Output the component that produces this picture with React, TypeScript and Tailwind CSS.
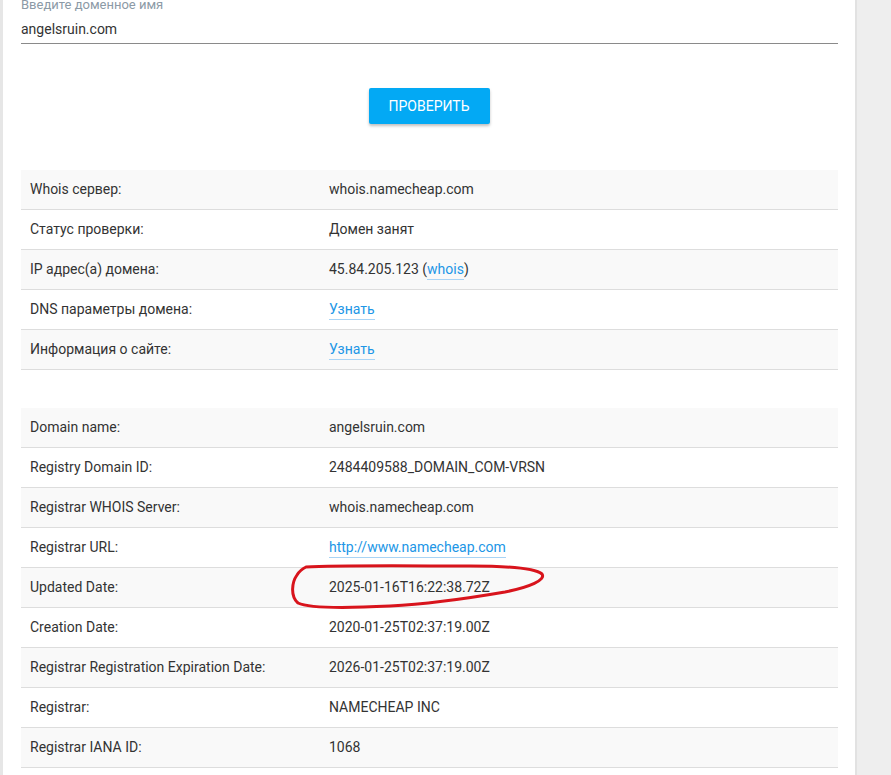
import React from "react";

type Row = { label: string; value: React.ReactNode };

const Link = ({ children }: { children: React.ReactNode }) => (
  <span className="text-[#2196e6] border-b border-[#a9d4f5] pb-[2px]">{children}</span>
);

const rows1: Row[] = [
  { label: "Whois сервер:", value: "whois.namecheap.com" },
  { label: "Статус проверки:", value: "Домен занят" },
  {
    label: "IP адрес(а) домена:",
    value: (
      <>
        45.84.205.123 (<Link>whois</Link>)
      </>
    ),
  },
  { label: "DNS параметры домена:", value: <Link>Узнать</Link> },
  { label: "Информация о сайте:", value: <Link>Узнать</Link> },
];

const rows2: Row[] = [
  { label: "Domain name:", value: "angelsruin.com" },
  { label: "Registry Domain ID:", value: "2484409588_DOMAIN_COM-VRSN" },
  { label: "Registrar WHOIS Server:", value: "whois.namecheap.com" },
  { label: "Registrar URL:", value: <Link>http://www.namecheap.com</Link> },
  { label: "Updated Date:", value: "2025-01-16T16:22:38.72Z" },
  { label: "Creation Date:", value: "2020-01-25T02:37:19.00Z" },
  { label: "Registrar Registration Expiration Date:", value: "2026-01-25T02:37:19.00Z" },
  { label: "Registrar:", value: "NAMECHEAP INC" },
  { label: "Registrar IANA ID:", value: "1068" },
];

const Table = ({ rows }: { rows: Row[] }) => (
  <div className="flex flex-col">
    {rows.map((r, i) => (
      <div
        key={i}
        className={`flex h-[40px] items-center border-b border-[#dddddd] ${i % 2 === 0 ? "bg-[#f9f9f9]" : "bg-white"}`}
      >
        <div className="w-[308px] pl-[9px] shrink-0">{r.label}</div>
        <div>{r.value}</div>
      </div>
    ))}
  </div>
);

export default function App() {
  return (
    <div
      className="relative flex h-[775px] overflow-hidden bg-[#eeeeee] text-[14px] text-[#333333]"
      style={{ fontFamily: "Roboto, 'Noto Sans', sans-serif" }}
    >
      <div className="w-[3px] shrink-0 bg-[#e6e6e6]" />
      <div className="w-[854px] shrink-0 bg-white border-r-2 border-[#e2e2e2] pl-[18px] pr-[17px]">
        <div className="-mt-[3px]">
          <div className="text-[13px] leading-[16px] text-[#8c9aa6]">Введите доменное имя</div>
          <div className="mt-[4px] h-[27px] leading-[24px] border-b border-[#8a8a8a] text-[#333]">angelsruin.com</div>
        </div>
        <div className="flex justify-center mt-[44px] pr-[1px]">
          <button className="h-[36px] w-[121px] rounded-[2px] bg-[#03a9f4] text-white text-[14px] uppercase shadow-[0_2px_3px_rgba(0,0,0,0.25)]">
            ПРОВЕРИТЬ
          </button>
        </div>
        <div className="mt-[46px]">
          <Table rows={rows1} />
        </div>
        <div className="mt-[38px]">
          <Table rows={rows2} />
        </div>
      </div>
      <div className="flex-1" />
      <svg
        className="absolute left-0 top-0 pointer-events-none"
        width="891"
        height="775"
        viewBox="0 0 891 775"
      >
        <path
          d="M306 567 C 340 565, 420 566, 470 566 C 505 566, 535 568, 542 574 C 546 580, 530 587, 505 592 C 470 598, 430 604, 390 606 C 350 608, 310 609, 298 603 C 290 596, 292 582, 297 575 C 300 570, 304 568, 306 567"
          fill="none"
          stroke="#d8141c"
          strokeWidth="3"
          strokeLinecap="round"
        />
      </svg>
    </div>
  );
}
